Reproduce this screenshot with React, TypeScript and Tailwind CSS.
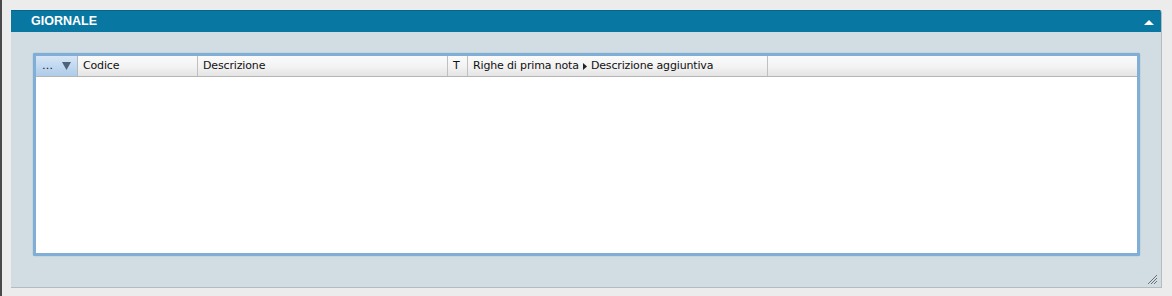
import { } from "react";

const columns = [
  { label: "Codice", width: "w-[120px]" },
  { label: "Descrizione", width: "w-[250px]" },
  { label: "T", width: "w-[20px]" },
];

export default function App() {
  return (
    <div className="h-[296px] w-[1172px] bg-[#ececec] border-l-2 border-[#4a4a4a] pl-[9px] pt-[10px] font-['DejaVu_Sans',sans-serif]">
      <div className="w-[1151px] h-[278px] flex flex-col bg-[#d1dde2] border-r border-b border-[#b4bcc0] rounded-tr-[3px] overflow-hidden">
        {/* Header */}
        <div className="h-[22px] flex items-center justify-between bg-[#0877a2] border-t border-[#06638a] pl-[20px] pr-[7px]">
          <span className="text-white font-bold text-[12.5px] font-['Liberation_Sans',sans-serif]">GIORNALE</span>
          <svg width="10" height="6" viewBox="0 0 10 6">
            <path d="M0 6 L5 1 L10 6 Z" fill="#ffffff" />
          </svg>
        </div>

        {/* Body */}
        <div className="flex-1 relative px-[22px] pt-[21px]">
          <div className="w-[1107px] h-[203px] border-[3px] border-[#80aed6] rounded-[2px] bg-white shadow-[0_0_1px_#5d91c2]">
            <div className="flex h-[21px] border-b border-[#b5b5b5] bg-gradient-to-b from-[#fbfbfb] via-[#f3f3f3] to-[#e4e4e4] text-[11px] tracking-[-0.15px] text-[#111] leading-[20px]">
              <div className="w-[42px] flex items-center justify-between pl-[6px] pr-[6px] border-r border-[#aeb9c6] bg-gradient-to-b from-[#d7e6f6] via-[#c2d9f0] to-[#aecbe8]">
                <span>…</span>
                <svg width="9" height="8" viewBox="0 0 9 8">
                  <path d="M0 0 L9 0 L4.5 8 Z" fill="#4f6478" />
                </svg>
              </div>
              {columns.map((c) => (
                <div key={c.label} className={`${c.width} pl-[5px] border-r border-[#c0c0c0] whitespace-nowrap`}>
                  {c.label}
                </div>
              ))}
              <div className="w-[300px] pl-[5px] border-r border-[#c0c0c0] whitespace-nowrap flex items-center gap-[4px]">
                <span>Righe di prima nota</span>
                <svg width="4" height="7" viewBox="0 0 4 7">
                  <path d="M0 0 L4 3.5 L0 7 Z" fill="#222" />
                </svg>
                <span>Descrizione aggiuntiva</span>
              </div>
              <div className="flex-1" />
            </div>
          </div>
          {/* resize grip */}
          <svg className="absolute right-[3px] bottom-[2px]" width="11" height="11" viewBox="0 0 11 11">
            <path d="M1 10 L10 1 M4 10 L10 4 M7 10 L10 7" stroke="#6b7175" strokeWidth="1" />
          </svg>
        </div>
      </div>
    </div>
  );
}
